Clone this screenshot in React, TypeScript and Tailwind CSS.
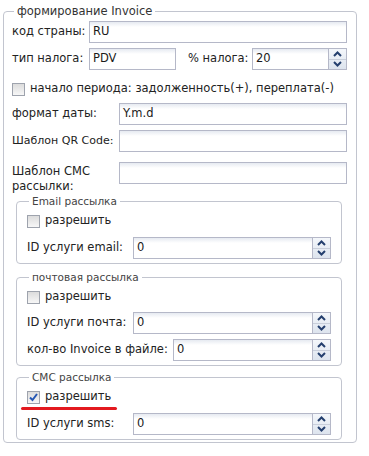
import React from "react";

const font = { fontFamily: '"DejaVu Sans", Verdana, sans-serif' };

function Spinner() {
  return (
    <div className="flex flex-col w-[18px] h-full border-l border-[#b5b8c8] bg-gradient-to-b from-[#f4f7fb] to-[#dde4ee]">
      <div className="flex-1 flex items-center justify-center border-b border-[#c9cfdb]">
        <svg width="9" height="6" viewBox="0 0 9 6">
          <path d="M1 5 L4.5 1.5 L8 5" fill="none" stroke="#243f6e" strokeWidth="2" />
        </svg>
      </div>
      <div className="flex-1 flex items-center justify-center">
        <svg width="9" height="6" viewBox="0 0 9 6">
          <path d="M1 1 L4.5 4.5 L8 1" fill="none" stroke="#243f6e" strokeWidth="2" />
        </svg>
      </div>
    </div>
  );
}

function Field({
  value = "",
  spin = false,
  className = "",
}: {
  value?: string;
  spin?: boolean;
  className?: string;
}) {
  return (
    <div
      className={`flex h-[22px] border border-[#b5b8c8] bg-[linear-gradient(to_bottom,#e6eaf1,#ffffff_5px)] ${className}`}
    >
      <div className="flex-1 flex items-center pl-[3px] text-[11.5px] text-[#1a1a1a]">{value}</div>
      {spin && <Spinner />}
    </div>
  );
}

function Check({ checked = false }: { checked?: boolean }) {
  return (
    <div className="w-[13px] h-[13px] border border-[#9ea3ad] bg-gradient-to-b from-[#dcdcdc] to-[#f7f7f7] flex items-center justify-center">
      {checked && (
        <svg width="11" height="11" viewBox="0 0 11 11">
          <path d="M2 5.5 L4.5 8 L9 2" fill="none" stroke="#2557b3" strokeWidth="2" />
        </svg>
      )}
    </div>
  );
}

function CheckRow({ label, checked = false }: { label: string; checked?: boolean }) {
  return (
    <div className="flex items-center gap-[5px] h-[22px]">
      <Check checked={checked} />
      <span className="text-[11.5px]">{label}</span>
    </div>
  );
}

function Row({
  label,
  width,
  value,
  spin,
  className = "",
  labelClass = "text-[11.5px]",
}: {
  label: string;
  width: string;
  value?: string;
  spin?: boolean;
  className?: string;
  labelClass?: string;
}) {
  return (
    <div className={`flex items-center ${className}`}>
      <div className={`${width} ${labelClass} shrink-0`}>{label}</div>
      <Field value={value} spin={spin} className="flex-1" />
    </div>
  );
}

function SubSet({
  title,
  className = "",
  children,
}: {
  title: string;
  className?: string;
  children: React.ReactNode;
}) {
  return (
    <fieldset
      className={`ml-[4px] mr-[5px] border border-[#c2c5cf] rounded-[4px] pl-[10px] pr-[10px] pt-[2px] pb-[4px] ${className}`}
    >
      <legend className="ml-[2px] px-[3px] text-[10.5px] leading-[13px] text-[#444]">{title}</legend>
      {children}
    </fieldset>
  );
}

export default function App() {
  return (
    <div className="w-[369px] h-[456px] bg-white text-[#222] pl-[3px] pr-[12px] pt-[4px]" style={font}>
      <fieldset className="border border-[#c2c5cf] rounded-[4px] pl-[8px] pr-[9px] pt-[2px] pb-[2px]">
        <legend className="ml-[2px] px-[3px] text-[11.5px] leading-[15px] text-[#333]">
          формирование Invoice
        </legend>

        <Row label="код страны:" width="w-[77px]" value="RU" />

        <div className="flex items-center mt-[5px]">
          <div className="w-[77px] text-[11.5px] shrink-0">тип налога:</div>
          <Field value="PDV" className="w-[87px]" />
          <div className="w-[76px] pl-[12px] text-[11.5px] shrink-0">% налога:</div>
          <Field value="20" spin className="flex-1" />
        </div>

        <div className="mt-[8px]">
          <CheckRow label="начало периода: задолженность(+), переплата(-)" />
        </div>

        <Row label="формат даты:" width="w-[107px]" value="Y.m.d" className="mt-[3px]" />
        <Row
          label="Шаблон QR Code:"
          width="w-[107px]"
          className="mt-[5px]"
          labelClass="text-[11px]"
        />

        <div className="flex items-start mt-[10px]">
          <div className="w-[107px] text-[11.5px] leading-[15px] pt-[2px] shrink-0">
            Шаблон СМС
            <br />
            рассылки:
          </div>
          <Field className="flex-1" />
        </div>

        <SubSet title="Email рассылка" className="mt-[1px]">
          <CheckRow label="разрешить" />
          <Row label="ID услуги email:" width="w-[106px]" value="0" spin className="mt-[5px]" />
        </SubSet>

        <SubSet title="почтовая рассылка" className="mt-[7px]">
          <CheckRow label="разрешить" />
          <Row label="ID услуги почта:" width="w-[106px]" value="0" spin className="mt-[4px]" />
          <Row label="кол-во Invoice в файле:" width="w-[146px]" value="0" spin className="mt-[5px]" />
        </SubSet>

        <SubSet title="СМС рассылка" className="mt-[5px]">
          <div className="relative">
            <CheckRow label="разрешить" checked />
            <div className="absolute left-[-6px] top-[21px] w-[96px] h-[3px] rounded-full bg-[#e3191f]" />
          </div>
          <Row label="ID услуги sms:" width="w-[106px]" value="0" spin className="mt-[5px]" />
        </SubSet>
      </fieldset>
    </div>
  );
}
